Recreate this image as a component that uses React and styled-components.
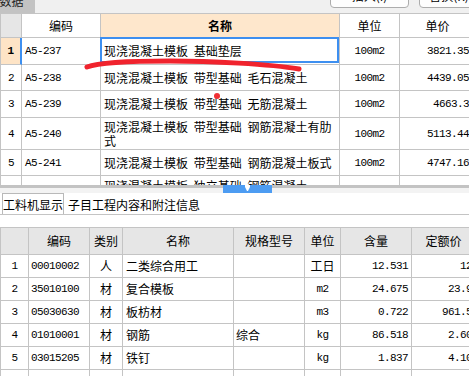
import React from 'react';
import styled, { createGlobalStyle } from 'styled-components';

const GlobalStyle = createGlobalStyle`
  html, body {
    margin: 0;
    padding: 0;
    background: #fff;
  }
  body {
    font-family: "Noto Sans CJK SC", sans-serif;
    font-size: 12px;
    color: #000;
  }
`

const LINE = '#c4c4c4';
const UPPER_COLS = '21px 79px 239px 60px 76px';
const LOWER_COLS = '28px 61px 33px 111px 71px 36px 71px 64px';

const Page = styled.div`
  position: relative;
  width: 469px;
  height: 376px;
  overflow: hidden;
  display: flex;
  flex-direction: column;
`
const TopBar = styled.div`
  height: 13px;
  flex-shrink: 0;
  display: flex;
  align-items: flex-end;
  background: #f0f0f0;
  overflow: hidden;
`
const DataTab = styled.div`
  margin-left: -12px;
  width: 47px;
  height: 26px;
  box-sizing: border-box;
  padding-bottom: 5px;
  display: flex;
  align-items: flex-end;
  justify-content: center;
  background: #c3c3c3;
  line-height: 14px;
  color: #222;
`
const ButtonGroup = styled.div`
  margin-left: auto;
  margin-right: -10px;
  margin-bottom: 5px;
  display: flex;
  gap: 10px;
`
const ToolButton = styled.div`
  width: ${p => p.$w}px;
  height: 24px;
  box-sizing: border-box;
  border: 1px solid #acacac;
  border-radius: 4px;
  background: #fdfdfd;
  display: flex;
  align-items: flex-end;
  justify-content: center;
  padding-bottom: 4px;
  line-height: 14px;
`
const UpperTable = styled.div`
  width: 477px;
  height: 171px;
  flex-shrink: 0;
  overflow: hidden;
  border-top: 1px solid ${LINE};
  border-left: 1px solid ${LINE};
`
const Row = styled.div`
  display: grid;
  grid-template-columns: ${p => p.$cols};
  height: ${p => p.$h}px;
`
const Cell = styled.div`
  position: relative;
  box-sizing: border-box;
  border-right: ${p => (p.$mark ? '2px solid #3d8ff0' : `1px solid ${LINE}`)};
  border-bottom: 1px solid ${LINE};
  display: flex;
  align-items: ${p => p.$valign || 'center'};
  justify-content: ${p => p.$align || 'flex-start'};
  padding: ${p => p.$top || 0}px ${p => (p.$pad != null ? p.$pad : 3)}px 0;
  background: ${p => p.$bg || '#fff'};
  font-weight: ${p => (p.$bold ? 700 : 400)};
  white-space: ${p => (p.$wrap ? 'normal' : 'nowrap')};
  line-height: 14px;
  word-spacing: 3px;
  overflow: hidden;

  ${p => p.$selected && `
    overflow: visible;
    &::after {
      content: '';
      position: absolute;
      left: -1px;
      top: -1px;
      right: 0;
      bottom: 1px;
      border: 2px solid #3d8ff0;
    }
  `}
`
const Mono = styled.span`
  font-family: "Liberation Mono", monospace;
  font-size: 11px;
  letter-spacing: -0.6px;
`
const Splitter = styled.div`
  height: 8px;
  flex-shrink: 0;
  display: flex;
  background: linear-gradient(#c3c3c3 0 3px, #f3f3f3 3px 8px);
`
const CollapseThumb = styled.div`
  margin-left: 223px;
  width: 49px;
  height: 8px;
  background: #4d9cf2;
  display: flex;
  justify-content: center;
`
const TabBar = styled.div`
  height: 22px;
  flex-shrink: 0;
  box-sizing: border-box;
  display: flex;
  align-items: flex-end;
  padding-left: 2px;
  border-bottom: 1px solid ${LINE};
`
const Tab = styled.div`
  height: 21px;
  box-sizing: border-box;
  display: flex;
  align-items: flex-end;
  padding: 0 ${p => (p.$active ? 0 : 3)}px 2px;
  border: 1px solid ${p => (p.$active ? '#b9b9b9' : 'transparent')};
  border-bottom: none;
  font-size: 12px;
  line-height: 14px;
`
const Gap = styled.div`
  height: 12px;
  flex-shrink: 0;
`
const LowerTable = styled.div`
  width: 477px;
  flex: 1;
  overflow: hidden;
  border-top: 1px solid ${LINE};
  border-left: 1px solid ${LINE};
`
const Annotation = styled.svg`
  position: absolute;
  left: 0;
  top: 0;
  pointer-events: none;
`

const upperRows = [
  { n: '1', code: 'A5-237', name: '现浇混凝土模板 基础垫层', unit: '100m2', price: '3821.35', h: 27, active: true },
  { n: '2', code: 'A5-238', name: '现浇混凝土模板 带型基础 毛石混凝土', unit: '100m2', price: '4439.05', h: 26 },
  { n: '3', code: 'A5-239', name: '现浇混凝土模板 带型基础 无筋混凝土', unit: '100m2', price: '4663.3', h: 27 },
  { n: '4', code: 'A5-240', name: '现浇混凝土模板 带型基础 钢筋混凝土有肋式', unit: '100m2', price: '5113.44', h: 32 },
  { n: '5', code: 'A5-241', name: '现浇混凝土模板 带型基础 钢筋混凝土板式', unit: '100m2', price: '4747.16', h: 26 },
  { n: '6', code: 'A5-242', name: '现浇混凝土模板 独立基础 钢筋混凝土', unit: '100m2', price: '4515.27', h: 32, tall: true },
]

const lowerHeader = ['', '编码', '类别', '名称', '规格型号', '单位', '含量', '定额价'];

const lowerRows = [
  { n: '1', code: '00010002', kind: '人', name: '二类综合用工', spec: '', unit: '工日', qty: '12.531', price: '12' },
  { n: '2', code: '35010100', kind: '材', name: '复合模板', spec: '', unit: 'm2', qty: '24.675', price: '23.9' },
  { n: '3', code: '05030630', kind: '材', name: '板枋材', spec: '', unit: 'm3', qty: '0.722', price: '961.5' },
  { n: '4', code: '01010001', kind: '材', name: '钢筋', spec: '综合', unit: 'kg', qty: '86.518', price: '2.60' },
  { n: '5', code: '03015205', kind: '材', name: '铁钉', spec: '', unit: 'kg', qty: '1.837', price: '4.10' },
  { n: '6', code: '', kind: '', name: '', spec: '', unit: '', qty: '', price: '' },
]

const isAscii = (s) => /^[\x00-\x7f]+$/.test(s);
const Text = ({ children }) => (isAscii(children) ? <Mono>{children}</Mono> : children);

export default function App() {
  return (
    <>
      <GlobalStyle />
      <Page>
        <TopBar>
          <DataTab>数据</DataTab>
          <ButtonGroup>
            <ToolButton $w={79}>插入(I)</ToolButton>
            <ToolButton $w={60}>替换(R)</ToolButton>
          </ButtonGroup>
        </TopBar>

        <UpperTable>
          <Row $cols={UPPER_COLS} $h={24}>
            <Cell $bg="#e6e6e6" />
            <Cell $align="center">编码</Cell>
            <Cell $align="center" $bg="#fee7cc" $bold>名称</Cell>
            <Cell $align="center">单位</Cell>
            <Cell $align="center">单价</Cell>
          </Row>
          {upperRows.map((r) => (
            <Row $cols={UPPER_COLS} $h={r.h} key={r.n}>
              <Cell $align="center" $pad={0} $bg={r.active ? '#fee4c6' : '#fff'} $bold={r.active} $mark={r.active}>
                <Mono>{r.n}</Mono>
              </Cell>
              <Cell><Mono>{r.code}</Mono></Cell>
              <Cell $wrap $selected={r.active} $valign={r.tall ? 'flex-start' : 'center'} $top={r.tall ? 3 : 0}>
                {r.name}
              </Cell>
              <Cell $align="center"><Mono>{r.unit}</Mono></Cell>
              <Cell $align="flex-end" $pad={6}><Mono>{r.price}</Mono></Cell>
            </Row>
          ))}
        </UpperTable>

        <Splitter>
          <CollapseThumb>
            <svg width="7" height="7" viewBox="0 0 7 7">
              <polygon points="1,0 6,0 6,2 4,6 3,6 1,2" fill="#fff" />
            </svg>
          </CollapseThumb>
        </Splitter>

        <TabBar>
          <Tab $active>工料机显示</Tab>
          <Tab>子目工程内容和附注信息</Tab>
        </TabBar>
        <Gap />

        <LowerTable>
          <Row $cols={LOWER_COLS} $h={27}>
            {lowerHeader.map((h, i) => (
              <Cell key={i} $align="center" $bg="#e6e6e6">{h}</Cell>
            ))}
          </Row>
          {lowerRows.map((r) => (
            <Row $cols={LOWER_COLS} $h={23} key={r.n}>
              <Cell $align="center" $pad={0}><Mono>{r.n}</Mono></Cell>
              <Cell $pad={2}><Mono>{r.code}</Mono></Cell>
              <Cell $align="center">{r.kind}</Cell>
              <Cell>{r.name}</Cell>
              <Cell $pad={2}>{r.spec}</Cell>
              <Cell $align="center" $pad={0}>{r.unit && <Text>{r.unit}</Text>}</Cell>
              <Cell $align="flex-end"><Mono>{r.qty}</Mono></Cell>
              <Cell $align="flex-end"><Mono>{r.price}</Mono></Cell>
            </Row>
          ))}
        </LowerTable>

        <Annotation width="469" height="376" viewBox="0 0 469 376">
          <path
            d="M87,67 C100,62 140,61 170,61 C210,61 270,64 299,69"
            fill="none"
            stroke="#f0232d"
            strokeWidth="5"
            strokeLinecap="round"
          />
          <circle cx="217" cy="96" r="3" fill="#f03035" />
        </Annotation>
      </Page>
    </>
  );
}
